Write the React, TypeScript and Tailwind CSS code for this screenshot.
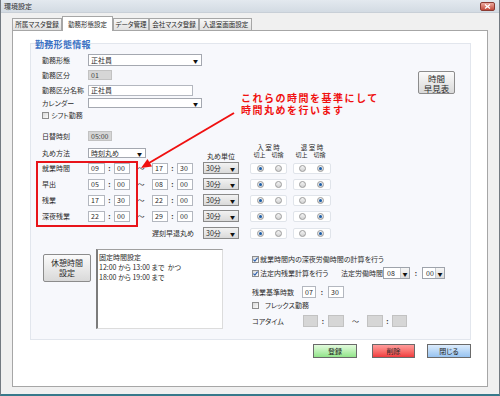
import React from "react";

function Lbl({ children, className = "" }: { children?: React.ReactNode; className?: string }) {
  return <span className={`w-[46px] shrink-0 whitespace-nowrap ${className}`}>{children}</span>;
}

function Sel({
  className = "",
  value = "",
  tone = "white",
}: {
  className?: string;
  value?: string;
  tone?: "white" | "gray" | "btn";
}) {
  if (tone === "btn") {
    return (
      <div className={`flex items-center border border-[#9ea3ab] bg-white ${className}`}>
        <span className="pl-[3px]">{value}</span>
        <span className="ml-auto h-full w-[9px] border-l border-[#c4c8ce] bg-linear-to-b from-[#f6f6f6] to-[#dcdcdc] flex items-center justify-center text-[5px] text-[#111]">
          ▼
        </span>
      </div>
    );
  }
  const base =
    tone === "gray"
      ? "bg-linear-to-b from-[#f2f2f2] to-[#dadada] border-[#8a8a8a]"
      : "bg-white border-[#a4a8b0]";
  return (
    <div className={`flex items-center border ${base} ${className}`}>
      <span className="pl-[2px] whitespace-nowrap">{value}</span>
      <span className="ml-auto mr-[3px] text-[5px] text-[#111]">▼</span>
    </div>
  );
}

function Inp({ className = "", value = "", dis = false }: { className?: string; value?: string; dis?: boolean }) {
  return (
    <div
      className={`flex items-center border ${
        dis ? "bg-[#d6d6d6] border-[#c2c2c2] text-[#444]" : "bg-white border-[#b3b7bf]"
      } ${className}`}
    >
      <span className="pl-[2px] whitespace-nowrap">{value}</span>
    </div>
  );
}

function Radio({ on = false }: { on?: boolean }) {
  return (
    <span className="w-[7px] h-[7px] shrink-0 rounded-full border border-[#9b9b9b] bg-linear-to-b from-[#f4f4f4] to-[#d2d2d2] flex items-center justify-center">
      {on && <span className="w-[3px] h-[3px] rounded-full bg-[#1c5ea8]" />}
    </span>
  );
}

function Check({ on = false }: { on?: boolean }) {
  return (
    <span className="w-[7px] h-[7px] shrink-0 border border-[#8e8e8e] bg-linear-to-br from-[#dadada] to-[#fbfbfb] flex items-center justify-center">
      {on && (
        <svg width="5" height="5" viewBox="0 0 5 5">
          <path d="M0.4 2.6 L1.9 4.1 L4.6 0.7" stroke="#2b5fae" strokeWidth="1.1" fill="none" />
        </svg>
      )}
    </span>
  );
}

function RadioPairs() {
  return (
    <>
      <div className="ml-[11px] w-[37px] h-[11px] pl-[6px] flex items-center gap-[11px] bg-white border border-[#e0e4ea] rounded-[2px]">
        <Radio on />
        <Radio />
      </div>
      <div className="ml-[6px] w-[38px] h-[11px] pl-[5px] flex items-center gap-[11px] bg-white border border-[#e0e4ea] rounded-[2px]">
        <Radio />
        <Radio on />
      </div>
    </>
  );
}

function TimeRow({ label, a, b, c, d }: { label: string; a: string; b: string; c: string; d: string }) {
  return (
    <div className="h-[16px] flex items-center pl-[11px]">
      <Lbl>{label}</Lbl>
      <Inp className="w-[17px] h-[11px]" value={a} />
      <span className="w-[9px] text-center font-bold">:</span>
      <Inp className="w-[16px] h-[11px]" value={b} />
      <span className="w-[22px] text-center">～</span>
      <Inp className="w-[16px] h-[11px]" value={c} />
      <span className="w-[9px] text-center font-bold">:</span>
      <Inp className="w-[16px] h-[11px]" value={d} />
      <Sel tone="gray" className="ml-[10px] w-[36px] h-[12px]" value="30分" />
      <RadioPairs />
    </div>
  );
}

function Tab({ children, sel = false, w }: { children: React.ReactNode; sel?: boolean; w: string }) {
  return (
    <div
      className={`${w} shrink-0 flex items-center justify-center whitespace-nowrap border border-b-0 border-[#a6a6a6] text-[6.5px] ${
        sel ? "h-[15px] -mb-px bg-white" : "h-[12px] bg-linear-to-b from-[#f7f7f7] to-[#e1e1e1]"
      }`}
    >
      {children}
    </div>
  );
}

function ActBtn({ children, className }: { children: React.ReactNode; className: string }) {
  return (
    <div
      className={`h-[14px] flex items-center justify-center border border-[#6a6a6a] bg-linear-to-b text-[7px] text-[#222] ${className}`}
    >
      {children}
    </div>
  );
}

export default function App() {
  return (
    <div className="relative w-[500px] h-[396px] overflow-hidden flex flex-col bg-[#f0f0f0] border-l border-r border-b-2 border-l-[#737a81] border-r-[#737a81] border-b-[#37798b] font-['Noto_Sans_CJK_JP','Noto_Sans',sans-serif] [font-feature-settings:'palt'] text-[7px] leading-none text-[#2a2a2a]">
      {/* title bar */}
      <div className="h-[13px] shrink-0 flex items-center bg-linear-to-b from-[#e3e9ef] to-[#d3dbe3] border-b border-[#c8cfd7]">
        <span className="pl-[3px] text-[7px] text-[#2c2c2c]">環境設定</span>
        <div className="ml-auto mr-[4px] w-[15px] h-[9px] rounded-[2px] border border-[#8c3b32] bg-linear-to-b from-[#eba89e] to-[#c1483b] flex items-center justify-center">
          <svg width="7" height="5" viewBox="0 0 7 5">
            <path d="M1 0.5 L6 4.5 M6 0.5 L1 4.5" stroke="white" strokeWidth="1.3" />
          </svg>
        </div>
      </div>

      {/* body */}
      <div className="flex-1 flex flex-col px-[11px] pt-[3px]">
        <div className="relative z-10 flex items-end h-[14px]">
          <Tab w="w-[50px]">所属マスタ登録</Tab>
          <Tab w="w-[51px]" sel>
            勤務形態設定
          </Tab>
          <Tab w="w-[36px]">データ管理</Tab>
          <Tab w="w-[50px]">会社マスタ登録</Tab>
          <Tab w="w-[53px]">入退室画面設定</Tab>
        </div>

        <div className="h-[357px] border border-[#a6a6a6] bg-white flex flex-col">
          {/* group box */}
          <div className="ml-[17px] mt-[12px] w-[441px] h-[297px] shrink-0 border border-[#e2e6ed] bg-[#f7f8fc] flex flex-col">
            <div className="-mt-[4px] h-[10px] pl-[4px] text-[9px] leading-[10px] font-bold tracking-[0.3px] text-[#3b72c4]">
              勤務形態情報
            </div>

            {/* top section */}
            <div className="flex items-start">
              <div className="flex flex-col pl-[11px]">
                <div className="mt-[4px] h-[12px] flex items-center">
                  <Lbl>勤務形態</Lbl>
                  <Sel className="w-[114px] h-[12px]" value="正社員" />
                </div>
                <div className="mt-[4px] h-[10px] flex items-center">
                  <Lbl>勤務区分</Lbl>
                  <Inp dis className="w-[24px] h-[10px]" value="01" />
                </div>
                <div className="mt-[5px] h-[11px] flex items-center">
                  <Lbl>勤務区分名称</Lbl>
                  <Inp className="w-[105px] h-[11px]" value="正社員" />
                </div>
                <div className="mt-[2px] h-[10px] flex items-center">
                  <Lbl>カレンダー</Lbl>
                  <Sel className="w-[114px] h-[10px]" />
                </div>
                <div className="mt-[3px] h-[8px] flex items-center gap-[2px]">
                  <Check />
                  <span>シフト勤務</span>
                </div>
                <div className="mt-[12px] h-[10px] flex items-center">
                  <Lbl>日替時刻</Lbl>
                  <Inp dis className="w-[24px] h-[10px]" value="05:00" />
                </div>
              </div>
              <div className="ml-auto mr-[15px] mt-[21px] w-[37px] h-[23px] rounded-[2px] border border-[#8c8c8c] bg-linear-to-b from-[#fbfbfb] to-[#d9d9d9] flex flex-col items-center justify-center text-[8.5px] leading-[10px]">
                <span>時間</span>
                <span>早見表</span>
              </div>
            </div>

            {/* header row */}
            <div className="mt-[2px] h-[17px] flex pl-[11px]">
              <div className="self-end mb-[2px] h-[10px] flex items-center">
                <Lbl>丸め方法</Lbl>
                <Sel className="w-[58px] h-[10px]" value="時刻丸め" />
              </div>
              <div className="self-end ml-[57px] w-[36px] h-[8px] flex items-center justify-center whitespace-nowrap">
                丸め単位
              </div>
              <div className="ml-[11px] w-[37px] flex flex-col text-[6px]">
                <div className="h-[8px] flex items-center justify-center tracking-[1.5px] pl-[1.5px] text-[6.5px]">入室時</div>
                <div className="h-[7px] flex items-center pl-[6px] gap-[11px]">
                  <span className="w-[7px] flex justify-center whitespace-nowrap">切上</span>
                  <span className="w-[7px] flex justify-center whitespace-nowrap">切捨</span>
                </div>
              </div>
              <div className="ml-[6px] w-[38px] flex flex-col text-[6px]">
                <div className="h-[8px] flex items-center justify-center tracking-[1.5px] pl-[1.5px] text-[6.5px]">退室時</div>
                <div className="h-[7px] flex items-center pl-[5px] gap-[11px]">
                  <span className="w-[7px] flex justify-center whitespace-nowrap">切上</span>
                  <span className="w-[7px] flex justify-center whitespace-nowrap">切捨</span>
                </div>
              </div>
            </div>

            {/* time rows */}
            <TimeRow label="就業時間" a="09" b="00" c="17" d="30" />
            <TimeRow label="早出" a="05" b="00" c="08" d="00" />
            <TimeRow label="残業" a="17" b="30" c="22" d="00" />
            <TimeRow label="深夜残業" a="22" b="00" c="29" d="00" />
            <div className="mt-[1px] h-[16px] flex items-center pl-[11px]">
              <span className="ml-[110px] w-[51px] whitespace-nowrap">遅刻早退丸め</span>
              <Sel tone="gray" className="w-[36px] h-[12px]" value="30分" />
              <RadioPairs />
            </div>

            {/* bottom section */}
            <div className="mt-[8px] flex items-start pl-[12px]">
              <div className="mt-[5px] w-[48px] h-[28px] shrink-0 rounded-[2px] border border-[#8c8c8c] bg-linear-to-b from-[#fbfbfb] to-[#d9d9d9] flex flex-col items-center justify-center text-[8px] leading-[10px]">
                <span>休憩時間</span>
                <span>設定</span>
              </div>
              <div className="ml-[5px] w-[127px] h-[80px] shrink-0 bg-white border-t border-l-2 border-r border-b border-t-[#a0a0a0] border-l-[#7c7c7c] border-r-[#dcdcdc] border-b-[#dcdcdc] pl-[1px] pt-[2px] flex flex-col leading-[10px] whitespace-nowrap">
                <span>固定時間設定</span>
                <span>12:00 から 13:00 まで&nbsp;&nbsp;かつ</span>
                <span>18:00 から 19:00 まで</span>
              </div>
              <div className="ml-[29px] flex flex-col">
                <div className="mt-[6px] h-[8px] flex items-center gap-[1px] whitespace-nowrap">
                  <Check on />
                  <span>就業時間内の深夜労働時間の計算を行う</span>
                </div>
                <div className="mt-[4px] h-[12px] flex items-center whitespace-nowrap">
                  <Check on />
                  <span className="ml-[1px] w-[81px]">法定内残業計算を行う</span>
                  <span className="w-[42px]">法定労働時間</span>
                  <Sel tone="btn" className="w-[27px] h-[12px]" value="08" />
                  <span className="w-[12px] text-center font-bold">:</span>
                  <Sel tone="btn" className="w-[23px] h-[12px]" value="00" />
                </div>
                <div className="mt-[7px] h-[12px] flex items-center whitespace-nowrap">
                  <span className="w-[50px]">残業基準時数</span>
                  <Inp className="w-[14px] h-[12px]" value="07" />
                  <span className="w-[12px] text-center font-bold">:</span>
                  <Inp className="w-[16px] h-[12px]" value="30" />
                </div>
                <div className="mt-[3px] h-[8px] flex items-center gap-[6px] whitespace-nowrap">
                  <Check />
                  <span>フレックス勤務</span>
                </div>
                <div className="mt-[6px] h-[12px] flex items-center whitespace-nowrap">
                  <span className="w-[51px]">コアタイム</span>
                  <Inp dis className="w-[15px] h-[12px]" />
                  <span className="w-[10px] text-center font-bold">:</span>
                  <Inp dis className="w-[16px] h-[12px]" />
                  <span className="w-[23px] text-center">～</span>
                  <Inp dis className="w-[16px] h-[12px]" />
                  <span className="w-[9px] text-center font-bold">:</span>
                  <Inp dis className="w-[15px] h-[12px]" />
                </div>
              </div>
            </div>
          </div>

          {/* action buttons */}
          <div className="ml-[17px] mt-[4px] w-[441px] flex justify-end">
            <ActBtn className="w-[44px] from-[#e2fbdd] to-[#92e48a]">登録</ActBtn>
            <ActBtn className="ml-[15px] w-[43px] from-[#ff9c9c] to-[#ef3a3e]">削除</ActBtn>
            <ActBtn className="ml-[12px] w-[44px] from-[#dcecfc] to-[#97c3f0]">閉じる</ActBtn>
          </div>
        </div>
      </div>

      {/* annotation overlays */}
      <div className="absolute left-[35px] top-[161px] w-[102px] h-[66px] border-2 border-[#e8141a] pointer-events-none" />
      <div className="absolute left-[240px] top-[92px] flex flex-col text-[10px] leading-[12px] font-bold tracking-[1.5px] text-[#f01010] whitespace-nowrap [font-feature-settings:normal]">
        <span>これらの時間を基準にして</span>
        <span>時間丸めを行います</span>
      </div>
      <svg className="absolute left-0 top-0 pointer-events-none" width="500" height="396" viewBox="0 0 500 396">
        <line x1="233" y1="113" x2="148" y2="163" stroke="#f01010" strokeWidth="2" />
        <polygon points="140,168 151,166.5 146.5,159" fill="#f01010" />
      </svg>
    </div>
  );
}
